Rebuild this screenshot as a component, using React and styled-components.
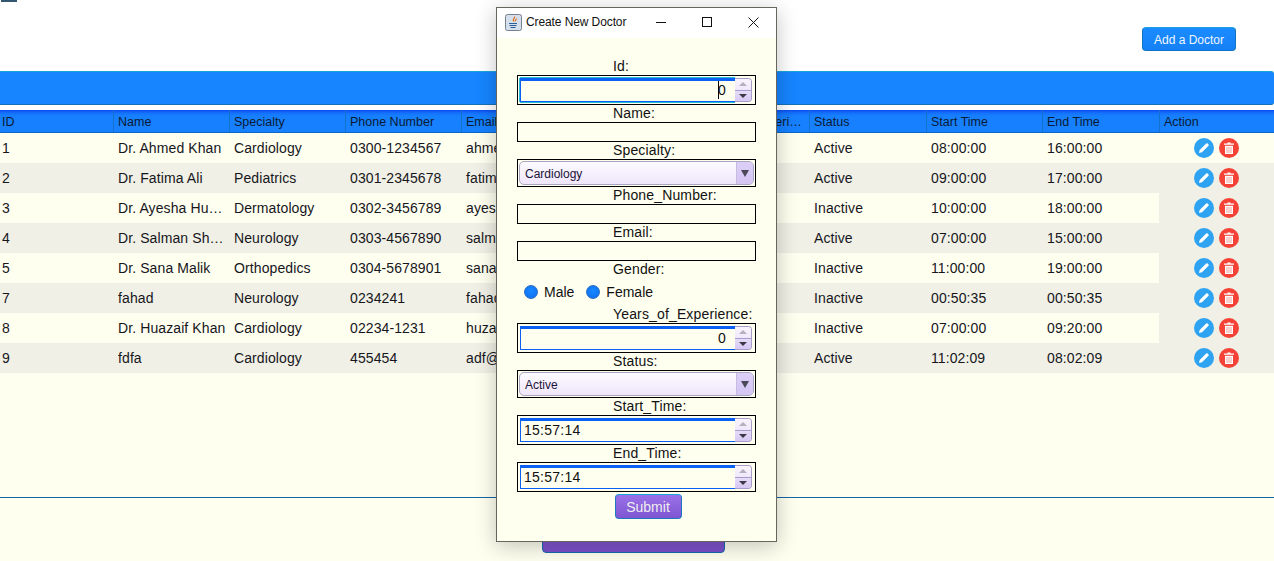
import React from 'react'
import styled, { createGlobalStyle } from 'styled-components'

const GlobalStyle = createGlobalStyle`
  html, body {
    margin: 0;
    padding: 0;
    background: #fffff0;
  }
  body {
    font-family: "Liberation Sans", Arial, sans-serif;
    overflow: hidden;
  }
`

const Page = styled.div`
  position: relative;
  width: 1274px;
  height: 561px;
  overflow: hidden;
  background: #fffff0;
  display: flex;
  flex-direction: column;
`

const TopArea = styled.div`
  height: 71px;
  background: #fff;
  display: flex;
  justify-content: flex-end;
  align-items: flex-start;
  padding: 27px 38px 0 0;
  box-sizing: border-box;
  position: relative;
`

const CornerMark = styled.div`
  position: absolute;
  left: 1px;
  top: 0;
  width: 16px;
  height: 2px;
  background: #33586f;
`

const BlueButton = styled.button`
  width: 94px;
  height: 24px;
  padding: 1px 0 0;
  border: 1px solid #0f74c4;
  border-top-color: #1aa0e0;
  border-radius: 4px;
  background: linear-gradient(#1a8cff, #1580f5);
  color: #eef6ff;
  font: 12px "Liberation Sans", Arial, sans-serif;
`

const Banner = styled.div`
  height: 34px;
  box-sizing: border-box;
  background: #1685ff;
  border-top: 1px solid #1ba4dc;
  border-bottom: 1px solid #1670b4;
  border-radius: 0 3px 3px 0;
`

const Gap = styled.div`
  height: 5px;
  background: #fff;
`

const Row = styled.div`
  display: grid;
  grid-template-columns: 113px repeat(6, 116px) 117px 116px 117px 1fr;
  width: 1274px;
`

const HeadRow = styled(Row)`
  height: 23px;
  box-sizing: border-box;
  background: linear-gradient(#0a4cf0 0, #1470fb 3px, #1680ff 6px);
  border-bottom: 1px solid #0a68c4;
`

const HeadCell = styled.div`
  padding: 5px 3px 0 ${p => (p.$first ? 2 : 4)}px;
  border-left: ${p => (p.$first ? 'none' : '1px solid #1272cc')};
  font-size: 12.5px;
  line-height: 15px;
  color: #0b1a33;
  white-space: nowrap;
  overflow: hidden;
  text-overflow: ellipsis;
`

const BodyRow = styled(Row)`
  height: 30px;
  background: ${p => (p.$alt ? '#f0f0e6' : '#fffff0')};
`

const BodyCell = styled.div`
  padding: 0 2px 0 ${p => (p.$first ? 2 : 5)}px;
  font-size: 14px;
  letter-spacing: 0.1px;
  line-height: 30px;
  color: #16161c;
  white-space: nowrap;
  overflow: hidden;
  text-overflow: ellipsis;
`

const ActionCell = styled.div`
  display: flex;
  justify-content: center;
  align-items: center;
  gap: 5px;
  background: ${p => (p.$top ? '#fffff0' : '#f0f0e6')};
`

const RoundIcon = styled.span`
  width: 20px;
  height: 20px;
  border-radius: 50%;
  background: ${p => p.$color};
  display: flex;
  align-items: center;
  justify-content: center;
`

const TableFill = styled.div`
  flex: 1;
`

const Footer = styled.div`
  height: 63px;
  border-top: 1px solid #1565a8;
  display: flex;
  padding-left: 542px;
  align-items: flex-start;
`

const PurpleWide = styled.button`
  margin-top: 12px;
  width: 183px;
  height: 43px;
  padding: 0;
  border: 1px solid #1668b0;
  border-radius: 4px;
  background: linear-gradient(#8f68e0, #7a4fc8);
  color: #eee;
  font: 14px "Liberation Sans", Arial, sans-serif;
`

const Dialog = styled.div`
  position: absolute;
  left: 496px;
  top: 7px;
  width: 281px;
  height: 535px;
  box-sizing: border-box;
  border: 1px solid #66665f;
  background: #fffff0;
  box-shadow: 0 4px 20px rgba(0, 0, 0, 0.24);
  display: flex;
  flex-direction: column;
`

const TitleBar = styled.div`
  height: 30px;
  box-sizing: border-box;
  padding: 0 0 2px 8px;
  background: #fff;
  display: flex;
  align-items: center;
  font: 12px "Liberation Sans", "Noto Sans", sans-serif;
  color: #111;
  flex-shrink: 0;
`

const TitleText = styled.span`
  margin-left: 4px;
  width: 125px;
  letter-spacing: -0.1px;
`

const WinButtons = styled.div`
  display: flex;
  align-items: center;
  gap: 36px;
  margin-left: 5px;
`

const Form = styled.div`
  padding: 20px 20px 0;
  display: flex;
  flex-direction: column;
`

const FieldLabel = styled.div`
  height: 17px;
  padding-left: 96px;
  font-size: 14px;
  letter-spacing: 0.15px;
  line-height: 17px;
  color: #111;
  white-space: nowrap;
`

const Framed = styled.div`
  width: 239px;
  box-sizing: border-box;
  border: 1px solid #000;
  height: ${p => p.$h}px;
  display: flex;
  align-items: center;
`

const SpinEdit = styled.div`
  width: 215px;
  height: 24px;
  margin-left: 2px;
  box-sizing: border-box;
  border-top: 3px solid #0a60f5;
  border-left: 1px solid #0a60f5;
  border-bottom: 1px solid #0a60f5;
  box-shadow: ${p => (p.$focus ? '-1px 0 0 #28bcd6, 0 -1px 0 #28bcd6, 0 1px 0 #28bcd6' : 'none')};
  font-size: 14px;
  letter-spacing: 0.25px;
  line-height: 19px;
  padding: 0 ${p => (p.$right ? 9 : 3)}px;
  text-align: ${p => (p.$right ? 'right' : 'left')};
  color: #111;
  position: relative;
`

const Caret = styled.span`
  position: absolute;
  right: 16px;
  top: 0;
  width: 1px;
  height: 18px;
  background: #000;
`

const SpinButtons = styled.div`
  width: 17px;
  height: 24px;
  box-sizing: border-box;
  border: 1px solid #a89ccc;
  border-left: none;
  border-radius: 0 4px 4px 0;
  overflow: hidden;
  display: flex;
  flex-direction: column;
`

const SpinButton = styled.div`
  flex: 1;
  display: flex;
  align-items: center;
  justify-content: center;
  background: ${p => (p.$down ? 'linear-gradient(#e6dcf8, #d6c8f3)' : 'linear-gradient(#f8f4fe, #efe8fb)')};
  border-top: ${p => (p.$down ? '1px solid #a89ccc' : 'none')};
`

const Arrow = styled.span`
  width: 0;
  height: 0;
  border-left: 4px solid transparent;
  border-right: 4px solid transparent;
  ${p => (p.$down ? 'border-top: 4px solid #3c3a48;' : 'border-bottom: 4px solid #b4b0bc;')}
`

const Combo = styled.div`
  width: 235px;
  height: 24px;
  margin-left: 1px;
  box-sizing: border-box;
  border: 1px solid #aaa6c2;
  border-radius: 5px;
  background: linear-gradient(#fdfaff, #efe6fb);
  display: flex;
  overflow: hidden;
`

const ComboText = styled.div`
  flex: 1;
  padding-left: 5px;
  font-size: 12px;
  line-height: 25px;
  color: #1a1238;
`

const ComboButton = styled.div`
  width: 16px;
  background: linear-gradient(#dccff7, #d4c5f4);
  border-left: 1px solid #c6bce0;
  display: flex;
  align-items: center;
  justify-content: center;
`

const ComboArrow = styled.span`
  width: 0;
  height: 0;
  border-left: 4px solid transparent;
  border-right: 4px solid transparent;
  border-top: 7px solid #4a4858;
`

const RadioRow = styled.div`
  height: 28px;
  display: flex;
  align-items: center;
  padding: 0 0 0 7px;
  font-size: 14px;
  color: #111;
`

const RadioDot = styled.span`
  width: 14px;
  height: 14px;
  border-radius: 50%;
  background: radial-gradient(circle at 50% 40%, #1788ff, #0e6cf0);
  border: 1px solid #2a6fc0;
  box-sizing: border-box;
  margin-right: 6px;
  flex-shrink: 0;
`

const RadioLabel = styled.span`
  margin-right: 12px;
`

const SubmitRow = styled.div`
  display: flex;
  justify-content: center;
  padding: 2px 0 0 24px;
  width: 214px;
`

const SubmitButton = styled.button`
  width: 67px;
  height: 25px;
  padding: 0;
  border: 1px solid #1d78c0;
  border-top-color: #1ba4dc;
  border-radius: 4px;
  background: linear-gradient(#9a72e8, #7f55d2);
  color: #eee;
  font: 14px "Liberation Sans", Arial, sans-serif;
`

const columns = [
  'ID', 'Name', 'Specialty', 'Phone Number', 'Email', 'Gender',
  'Years_of_Experience', 'Status', 'Start Time', 'End Time', 'Action',
]

const doctors = [
  ['1', 'Dr. Ahmed Khan', 'Cardiology', '0300-1234567', 'ahmed@example.com', 'Male', '15', 'Active', '08:00:00', '16:00:00'],
  ['2', 'Dr. Fatima Ali', 'Pediatrics', '0301-2345678', 'fatima@example.com', 'Female', '10', 'Active', '09:00:00', '17:00:00'],
  ['3', 'Dr. Ayesha Hussain', 'Dermatology', '0302-3456789', 'ayesha@example.com', 'Female', '8', 'Inactive', '10:00:00', '18:00:00'],
  ['4', 'Dr. Salman Sheikh', 'Neurology', '0303-4567890', 'salman@example.com', 'Male', '12', 'Active', '07:00:00', '15:00:00'],
  ['5', 'Dr. Sana Malik', 'Orthopedics', '0304-5678901', 'sana@example.com', 'Female', '9', 'Inactive', '11:00:00', '19:00:00'],
  ['7', 'fahad', 'Neurology', '0234241', 'fahad@example.com', 'Male', '3', 'Inactive', '00:50:35', '00:50:35'],
  ['8', 'Dr. Huazaif Khan', 'Cardiology', '02234-1231', 'huzaif@example.com', 'Male', '5', 'Inactive', '07:00:00', '09:20:00'],
  ['9', 'fdfa', 'Cardiology', '455454', 'adf@example.com', 'Male', '2', 'Active', '11:02:09', '08:02:09'],
]

const PencilIcon = () => (
  <svg width="14" height="14" viewBox="0 0 14 14">
    <path d="M2 12l.7-3L9.2 2.5a1 1 0 0 1 1.4 0l.9.9a1 1 0 0 1 0 1.4L5 11.3 2 12z" fill="#fff" />
  </svg>
)

const TrashIcon = () => (
  <svg width="14" height="14" viewBox="0 0 14 14">
    <path d="M2 2.5h3.5V1.500h3v1H12v1.300H2z" fill="#fff" />
    <path d="M3 4.800h8V13H3z" fill="#fff" />
    <path d="M5 6v6M7 6v6M9 6v6" stroke="#f0a09a" strokeWidth="1" />
  </svg>
)

const JavaIcon = () => (
  <svg width="17" height="17" viewBox="0 0 17 17">
    <rect x="0.5" y="0.5" width="16" height="16" rx="2" fill="#d5e0ec" stroke="#75818f" />
    <path d="M9.500 2.500c1 1.500-2.500 2.500-1 5M11.500 4.500c.4 1-2 1.500-1.200 3" stroke="#e0701a" strokeWidth="1.200" fill="none" />
    <path d="M4 9.500h8M4.500 11.500h7M5.500 13.500h5" stroke="#2a5f9a" strokeWidth="1" fill="none" />
  </svg>
)

const MinimizeIcon = () => (
  <svg width="10" height="10" viewBox="0 0 10 10">
    <path d="M0 5.500h10" stroke="#111" strokeWidth="1" />
  </svg>
)

const MaximizeIcon = () => (
  <svg width="10" height="10" viewBox="0 0 10 10">
    <rect x="0.500" y="0.500" width="9" height="9" fill="none" stroke="#111" strokeWidth="1" />
  </svg>
)

const CloseIcon = () => (
  <svg width="11" height="11" viewBox="0 0 11 11">
    <path d="M0.500 0.500l10 10M10.500 0.500l-10 10" stroke="#111" strokeWidth="1" />
  </svg>
)

const Spinner = ({ value, right, focus }) => (
  <Framed $h={30}>
    <SpinEdit $right={right} $focus={focus}>
      {value}
      {focus && <Caret />}
    </SpinEdit>
    <SpinButtons>
      <SpinButton><Arrow /></SpinButton>
      <SpinButton $down><Arrow $down /></SpinButton>
    </SpinButtons>
  </Framed>
)

const Select = ({ value }) => (
  <Framed $h={28}>
    <Combo>
      <ComboText>{value}</ComboText>
      <ComboButton><ComboArrow /></ComboButton>
    </Combo>
  </Framed>
)

const App = () => {
  return (
    <Page>
      <GlobalStyle />
      <TopArea>
        <CornerMark />
        <BlueButton>Add a Doctor</BlueButton>
      </TopArea>
      <Banner />
      <Gap />
      <HeadRow>
        {columns.map((c, i) => (
          <HeadCell key={c} $first={i === 0}>{c}</HeadCell>
        ))}
      </HeadRow>
      {doctors.map((d, i) => (
        <BodyRow key={d[0]} $alt={i % 2 === 1}>
          {d.map((v, j) => (
            <BodyCell key={j} $first={j === 0}>{v}</BodyCell>
          ))}
          <ActionCell $top={i === 0}>
            <RoundIcon $color="#2ea3f2"><PencilIcon /></RoundIcon>
            <RoundIcon $color="#f44336"><TrashIcon /></RoundIcon>
          </ActionCell>
        </BodyRow>
      ))}
      <TableFill />
      <Footer>
        <PurpleWide />
      </Footer>

      <Dialog>
        <TitleBar>
          <JavaIcon />
          <TitleText>Create New Doctor</TitleText>
          <WinButtons>
            <MinimizeIcon />
            <MaximizeIcon />
            <CloseIcon />
          </WinButtons>
        </TitleBar>
        <Form>
          <FieldLabel>Id:</FieldLabel>
          <Spinner value="0" right focus />
          <FieldLabel>Name:</FieldLabel>
          <Framed $h={20} />
          <FieldLabel>Specialty:</FieldLabel>
          <Select value="Cardiology" />
          <FieldLabel>Phone_Number:</FieldLabel>
          <Framed $h={20} />
          <FieldLabel>Email:</FieldLabel>
          <Framed $h={20} />
          <FieldLabel>Gender:</FieldLabel>
          <RadioRow>
            <RadioDot />
            <RadioLabel>Male</RadioLabel>
            <RadioDot />
            <RadioLabel>Female</RadioLabel>
          </RadioRow>
          <FieldLabel>Years_of_Experience:</FieldLabel>
          <Spinner value="0" right />
          <FieldLabel>Status:</FieldLabel>
          <Select value="Active" />
          <FieldLabel>Start_Time:</FieldLabel>
          <Spinner value="15:57:14" />
          <FieldLabel>End_Time:</FieldLabel>
          <Spinner value="15:57:14" />
          <SubmitRow>
            <SubmitButton>Submit</SubmitButton>
          </SubmitRow>
        </Form>
      </Dialog>
    </Page>
  )
}

export default App
